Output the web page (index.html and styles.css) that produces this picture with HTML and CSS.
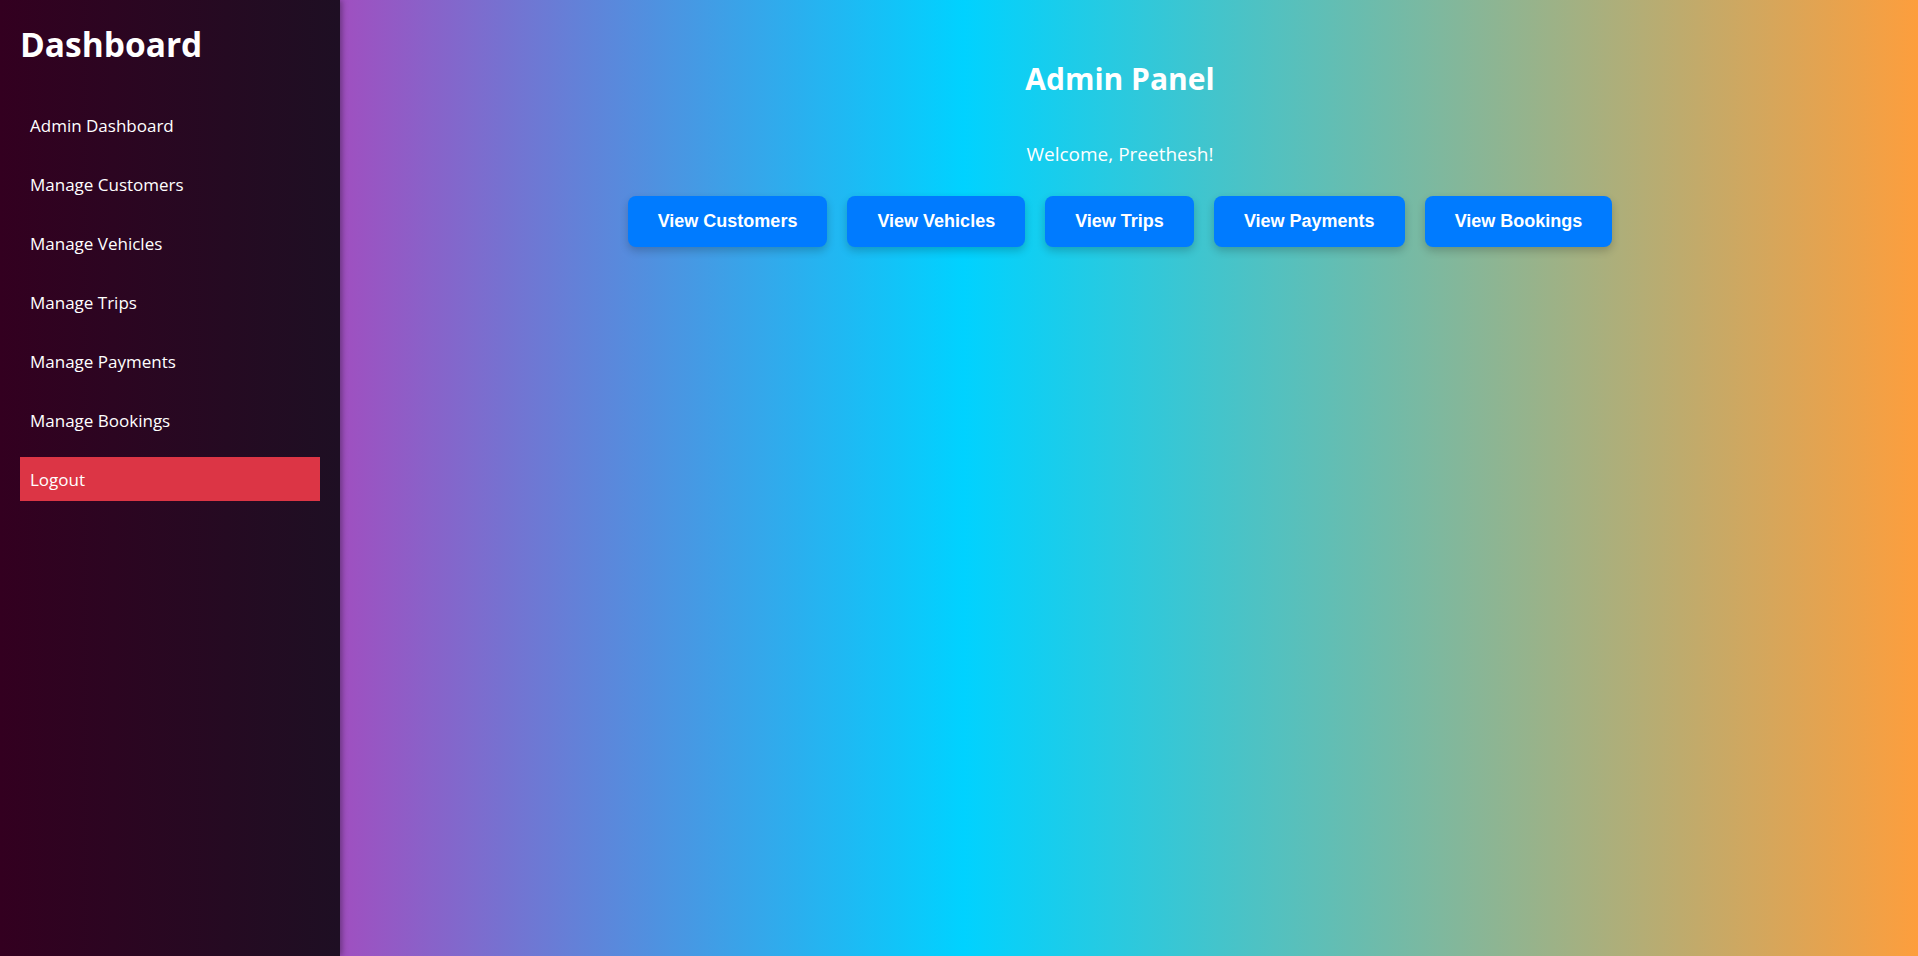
FILE: index.html
```html
<!DOCTYPE html>
<html lang="en">
<head>
<meta charset="utf-8">
<title>Admin Panel</title>
<link rel="stylesheet" href="styles.css">
</head>
<body>
<div class="layout">
  <aside class="sidebar">
    <h2 class="brand">Dashboard</h2>
    <nav class="nav">
      <a href="#" class="nav-link">Admin Dashboard</a>
      <a href="#" class="nav-link">Manage Customers</a>
      <a href="#" class="nav-link">Manage Vehicles</a>
      <a href="#" class="nav-link">Manage Trips</a>
      <a href="#" class="nav-link">Manage Payments</a>
      <a href="#" class="nav-link">Manage Bookings</a>
      <a href="#" class="nav-link logout">Logout</a>
    </nav>
  </aside>
  <main class="main">
    <h1 class="title">Admin Panel</h1>
    <p class="welcome">Welcome, Preethesh!</p>
    <div class="actions">
      <button class="btn">View Customers</button>
      <button class="btn">View Vehicles</button>
      <button class="btn">View Trips</button>
      <button class="btn">View Payments</button>
      <button class="btn">View Bookings</button>
    </div>
  </main>
</div>
</body>
</html>
```

FILE: styles.css
```css
* { box-sizing: content-box; }

body {
  margin: 0;
  font-family: "Open Sans", "Noto Sans", sans-serif;
  color: #fff;
}

.layout {
  display: flex;
  min-height: 100vh;
}

.sidebar {
  width: 300px;
  padding: 20px;
  flex-shrink: 0;
  background: linear-gradient(to right, #330020, #1e0f23);
  box-shadow: 2px 0 6px rgba(0, 0, 0, 0.35);
  position: relative;
  z-index: 1;
}

.brand {
  font-size: 33.5px;
  font-weight: 700;
  line-height: 44px;
  margin: 2px 0 37px 0;
  color: #fff;
}

.nav {
  display: flex;
  flex-direction: column;
}

.nav-link {
  display: block;
  padding: 11px 10px 9px;
  margin-bottom: 15px;
  font-size: 17px;
  line-height: 24px;
  color: #fff;
  text-decoration: none;
}

.nav-link.logout {
  background: #dc3545;
}

.main {
  flex: 1;
  padding: 20px 38px 20px 20px;
  text-align: center;
  background: linear-gradient(to right, #a04fc0 0%, #00d2ff 39.5%, #fd9e3d 100%);
}

.title {
  font-size: 30px;
  font-weight: 700;
  line-height: 40px;
  margin: 39px 0 0;
}

.welcome {
  font-size: 19px;
  line-height: 28px;
  margin: 41px 0 0;
}

.actions {
  display: flex;
  justify-content: center;
  gap: 20px;
  margin-top: 28px;
}

.btn {
  padding: 15px 30px;
  font-family: "Liberation Sans", Arial, sans-serif;
  font-size: 18px;
  font-weight: 700;
  line-height: 21px;
  color: #fff;
  background: #007bff;
  border: none;
  border-radius: 8px;
  box-shadow: 0 4px 8px rgba(0, 0, 0, 0.2);
  cursor: pointer;
}
```
